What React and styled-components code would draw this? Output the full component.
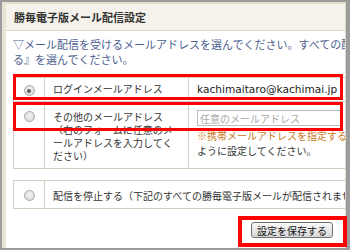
import React from "react";
import styled, { createGlobalStyle } from "styled-components";

const Global = createGlobalStyle`
  html, body { margin: 0; padding: 0; background: #9c9c9c; }
  body {
    width: 350px; height: 250px; overflow: hidden;
    font-family: "Noto Sans CJK JP", "Noto Sans", sans-serif;
  }
`;

const Stage = styled.div`
  position: relative;
  box-sizing: border-box;
  width: 350px;
  height: 250px;
  padding: 2px 4px 2px 2px;
`;

const Panel = styled.div`
  box-sizing: border-box;
  height: 100%;
  background: #fff;
  border-left: 4px solid #e7e3d5;
  border-right: 1px solid #dcd8cc;
  overflow: hidden;
  display: flex;
  flex-direction: column;
`;

const Header = styled.div`
  flex: none;
  height: 26px;
  border-top: 2px solid #e2ddcf;
  border-bottom: 1px solid #dad5c6;
  background: #f4f2ea;
  display: flex;
  align-items: center;
  padding-left: 8px;
  font-size: 11px;
  font-weight: bold;
  color: #333;
  white-space: nowrap;
`;

const Body = styled.div`
  padding: 6px 0 0 7px;
`;

const Intro = styled.p`
  margin: 0;
  font-size: 11px;
  line-height: 15px;
  color: #4c6090;
  white-space: nowrap;
`;

const Table = styled.table`
  border-collapse: collapse;
  table-layout: fixed;
  width: 430px;
  margin-top: ${(p) => p.$mt}px;
  border: 1px solid #d3cfc3;
`;

const Cell = styled.td`
  border: 1px solid #d3cfc3;
  vertical-align: top;
  padding: ${(p) => p.$pt}px 8px ${(p) => p.$pb}px;
  font-size: 10px;
  line-height: 13px;
  color: #333;
  white-space: nowrap;
`;

const RadioCell = styled(Cell)`
  text-align: center;
  padding-left: 0;
  padding-right: 0;
  line-height: 0;
`;

const Radio = styled.span`
  display: inline-block;
  box-sizing: border-box;
  width: 11px;
  height: 11px;
  margin-top: 1px;
  border-radius: 50%;
  border: 1px solid #a9a9a9;
  background: radial-gradient(circle at 50% 40%, #f4f4f4, #d2d2d2);
  position: relative;
  &::after {
    content: "";
    display: ${(p) => (p.$checked ? "block" : "none")};
    position: absolute;
    left: 2.5px;
    top: 2.5px;
    width: 4px;
    height: 4px;
    border-radius: 50%;
    background: #5c5c5c;
  }
`;

const Email = styled.span`
  font-family: "DejaVu Sans", sans-serif;
  font-size: 10.6px;
  color: #222;
`;

const Input = styled.input`
  display: block;
  box-sizing: border-box;
  width: 144px;
  height: 16px;
  margin: 0;
  padding: 0 2px;
  border: 1px solid #bdbdbd;
  font-family: "Noto Sans CJK JP", sans-serif;
  font-size: 10px;
  &::placeholder { color: #a8a8a8; }
`;

const Note = styled.div`
  margin-top: ${(p) => p.$mt}px;
  line-height: 15px;
  color: ${(p) => p.$color};
`;

const Actions = styled.div`
  display: flex;
  justify-content: flex-end;
  padding-right: 12px;
  margin-top: 13px;
`;

const Button = styled.button`
  height: 16px;
  padding: 0 5px;
  border: 1px solid #707070;
  border-radius: 3px;
  background: linear-gradient(#f8f8f8, #d8d8d8);
  font-family: "Noto Sans CJK JP", sans-serif;
  font-size: 10px;
  line-height: 13px;
  color: #111;
`;

const Mark = styled.div`
  position: absolute;
  box-sizing: border-box;
  left: ${(p) => p.$x}px;
  top: ${(p) => p.$y}px;
  width: ${(p) => p.$w}px;
  height: ${(p) => p.$h}px;
  border: ${(p) => p.$b}px solid #ff0000;
  pointer-events: none;
`;

export default function App() {
  return (
    <>
      <Global />
      <Stage>
        <Panel>
          <Header>勝毎電子版メール配信設定</Header>
          <Body>
            <Intro>
              ▽メール配信を受けるメールアドレスを選んでください。すべての配信を停止する場合は『配信を停止す
              <br />
              る』を選んでください。
            </Intro>
            <Table $mt={10}>
              <colgroup>
                <col style={{ width: 31 }} />
                <col style={{ width: 144 }} />
                <col />
              </colgroup>
              <tbody>
                <tr>
                  <RadioCell $pt={6} $pb={4}>
                    <Radio $checked />
                  </RadioCell>
                  <Cell $pt={4} $pb={5}>ログインメールアドレス</Cell>
                  <Cell $pt={4} $pb={5}>
                    <Email>kachimaitaro@kachimai.jp</Email>
                  </Cell>
                </tr>
                <tr>
                  <RadioCell $pt={8} $pb={6}>
                    <Radio />
                  </RadioCell>
                  <Cell $pt={8} $pb={6}>
                    その他のメールアドレス
                    <br />
                    （右のフォームに任意のメ
                    <br />
                    ールアドレスを入力してく
                    <br />
                    ださい）
                  </Cell>
                  <Cell $pt={8} $pb={6}>
                    <Input placeholder="任意のメールアドレス" />
                    <Note $mt={2} $color="#c77a1e">
                      ※携帯メールアドレスを指定する場合は、kachimai.jpからのメールを受信できる
                    </Note>
                    <Note $mt={0} $color="#333">
                      ように設定してください。
                    </Note>
                  </Cell>
                </tr>
              </tbody>
            </Table>
            <Table $mt={11}>
              <colgroup>
                <col style={{ width: 31 }} />
                <col />
              </colgroup>
              <tbody>
                <tr>
                  <RadioCell $pt={8} $pb={6}>
                    <Radio />
                  </RadioCell>
                  <Cell $pt={8} $pb={6}>
                    配信を停止する（下記のすべての勝毎電子版メールが配信されません）
                  </Cell>
                </tr>
              </tbody>
            </Table>
          </Body>
          <Actions>
            <Button type="button">設定を保存する</Button>
          </Actions>
        </Panel>
        <Mark $x={13} $y={74} $w={330} $h={26} $b={3} />
        <Mark $x={13} $y={102} $w={330} $h={29} $b={3} />
        <Mark $x={238} $y={216} $w={109} $h={31} $b={4} />
      </Stage>
    </>
  );
}
